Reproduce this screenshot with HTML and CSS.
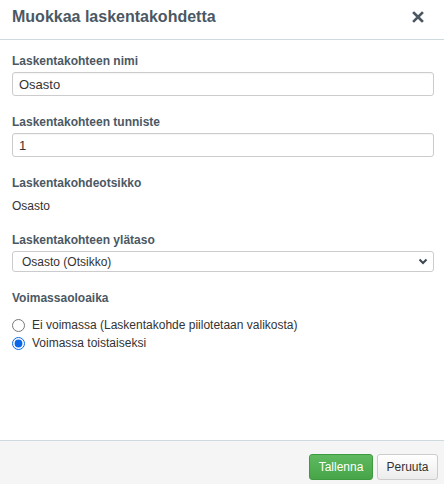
FILE: index.html
```html
<!DOCTYPE html>
<html lang="fi">
<head>
<meta charset="utf-8">
<title>Muokkaa laskentakohdetta</title>
<link rel="stylesheet" href="styles.css">
</head>
<body>
<div class="dialog">
  <div class="header">
    <h1 class="title">Muokkaa laskentakohdetta</h1>
    <button class="close" aria-label="Sulje">
      <svg width="12" height="12" viewBox="0 0 12 12"><path d="M2 2 L10 10 M10 2 L2 10" stroke="#4b5864" stroke-width="2.6" stroke-linecap="square"/></svg>
    </button>
  </div>
  <div class="body">
    <div class="group">
      <label class="label">Laskentakohteen nimi</label>
      <input class="input" type="text" value="Osasto">
    </div>
    <div class="group">
      <label class="label">Laskentakohteen tunniste</label>
      <input class="input" type="text" value="1">
    </div>
    <div class="group">
      <label class="label">Laskentakohdeotsikko</label>
      <div class="static">Osasto</div>
    </div>
    <div class="group">
      <label class="label">Laskentakohteen ylätaso</label>
      <div class="select-wrap">
        <select class="select"><option>Osasto (Otsikko)</option></select>
        <svg class="chevron" width="10" height="7" viewBox="0 0 10 7"><path d="M1.5 1.5 L5 5 L8.5 1.5" fill="none" stroke="#3d4852" stroke-width="2"/></svg>
      </div>
    </div>
    <div class="group">
      <label class="label">Voimassaoloaika</label>
      <div class="radios">
        <label class="radio"><input type="radio" name="v"><span>Ei voimassa (Laskentakohde piilotetaan valikosta)</span></label>
        <label class="radio"><input type="radio" name="v" checked><span>Voimassa toistaiseksi</span></label>
      </div>
    </div>
  </div>
  <div class="footer">
    <button class="btn btn-primary">Tallenna</button>
    <button class="btn btn-default">Peruuta</button>
  </div>
</div>
</body>
</html>
```
FILE: styles.css
```css
* { box-sizing: border-box; }
html, body { margin: 0; padding: 0; }
body {
  width: 444px;
  height: 484px;
  background: #fff;
  font-family: "Liberation Sans", Arial, sans-serif;
  font-size: 12px;
  color: #333;
  overflow: hidden;
}
.dialog {
  display: flex;
  flex-direction: column;
  height: 484px;
}
.header {
  display: flex;
  align-items: center;
  justify-content: space-between;
  height: 40px;
  padding: 0 20px 6px 12px;
  border-bottom: 1px solid #cfd9e0;
}
.title {
  margin: 0;
  font-size: 16px;
  font-weight: bold;
  color: #4b5864;
  line-height: 20px;
}
.close {
  border: 0;
  background: none;
  padding: 0;
  width: 12px;
  height: 12px;
  display: flex;
}
.body {
  flex: 1;
  padding: 14px 10px 0 12px;
  display: flex;
  flex-direction: column;
  gap: 19px;
}
.group {
  display: flex;
  flex-direction: column;
}
.label {
  font-size: 12px;
  font-weight: bold;
  color: #4b5864;
  line-height: 15px;
  margin-bottom: 3px;
}
.input {
  width: 100%;
  height: 24px;
  border: 1px solid #ccc;
  border-radius: 3px;
  padding: 0 6px;
  font-family: "Liberation Sans", Arial, sans-serif;
  font-size: 13px;
  color: #333;
  background: #fff;
  box-shadow: inset 0 1px 1px rgba(0,0,0,0.04);
}
.static {
  line-height: 15px;
  margin-top: 5px;
  color: #333;
}
.select-wrap {
  position: relative;
}
.select {
  appearance: none;
  -webkit-appearance: none;
  width: 100%;
  height: 21px;
  border: 1px solid #ccc;
  border-radius: 3px;
  padding: 0 9px;
  font-family: "Liberation Sans", Arial, sans-serif;
  font-size: 12px;
  color: #333;
  background: #fff;
}
.chevron {
  position: absolute;
  right: 6px;
  top: 7px;
  pointer-events: none;
}
.radios {
  display: flex;
  flex-direction: column;
  margin-top: 7px;
}
.radio {
  display: flex;
  align-items: center;
  height: 18px;
  gap: 7px;
}
.radio input {
  margin: 0;
  width: 13px;
  height: 13px;
  accent-color: #0a68e8;
}
.footer {
  display: flex;
  justify-content: flex-end;
  align-items: flex-start;
  gap: 4px;
  height: 44px;
  padding: 13px 6px 0 0;
  background: #f5f5f5;
  border-top: 1px solid #cfd9e0;
}
.btn {
  height: 26px;
  padding: 0 8px;
  font-family: "Liberation Sans", Arial, sans-serif;
  font-size: 12px;
  border-radius: 3px;
  cursor: pointer;
}
.btn-primary {
  width: 64px;
  color: #fff;
  background: linear-gradient(#5fba5f, #47a447);
  border: 1px solid #3e9a3e;
}
.btn-default {
  width: 61px;
  color: #333;
  background: linear-gradient(#fff, #ececec);
  border: 1px solid #ccc;
}
```
